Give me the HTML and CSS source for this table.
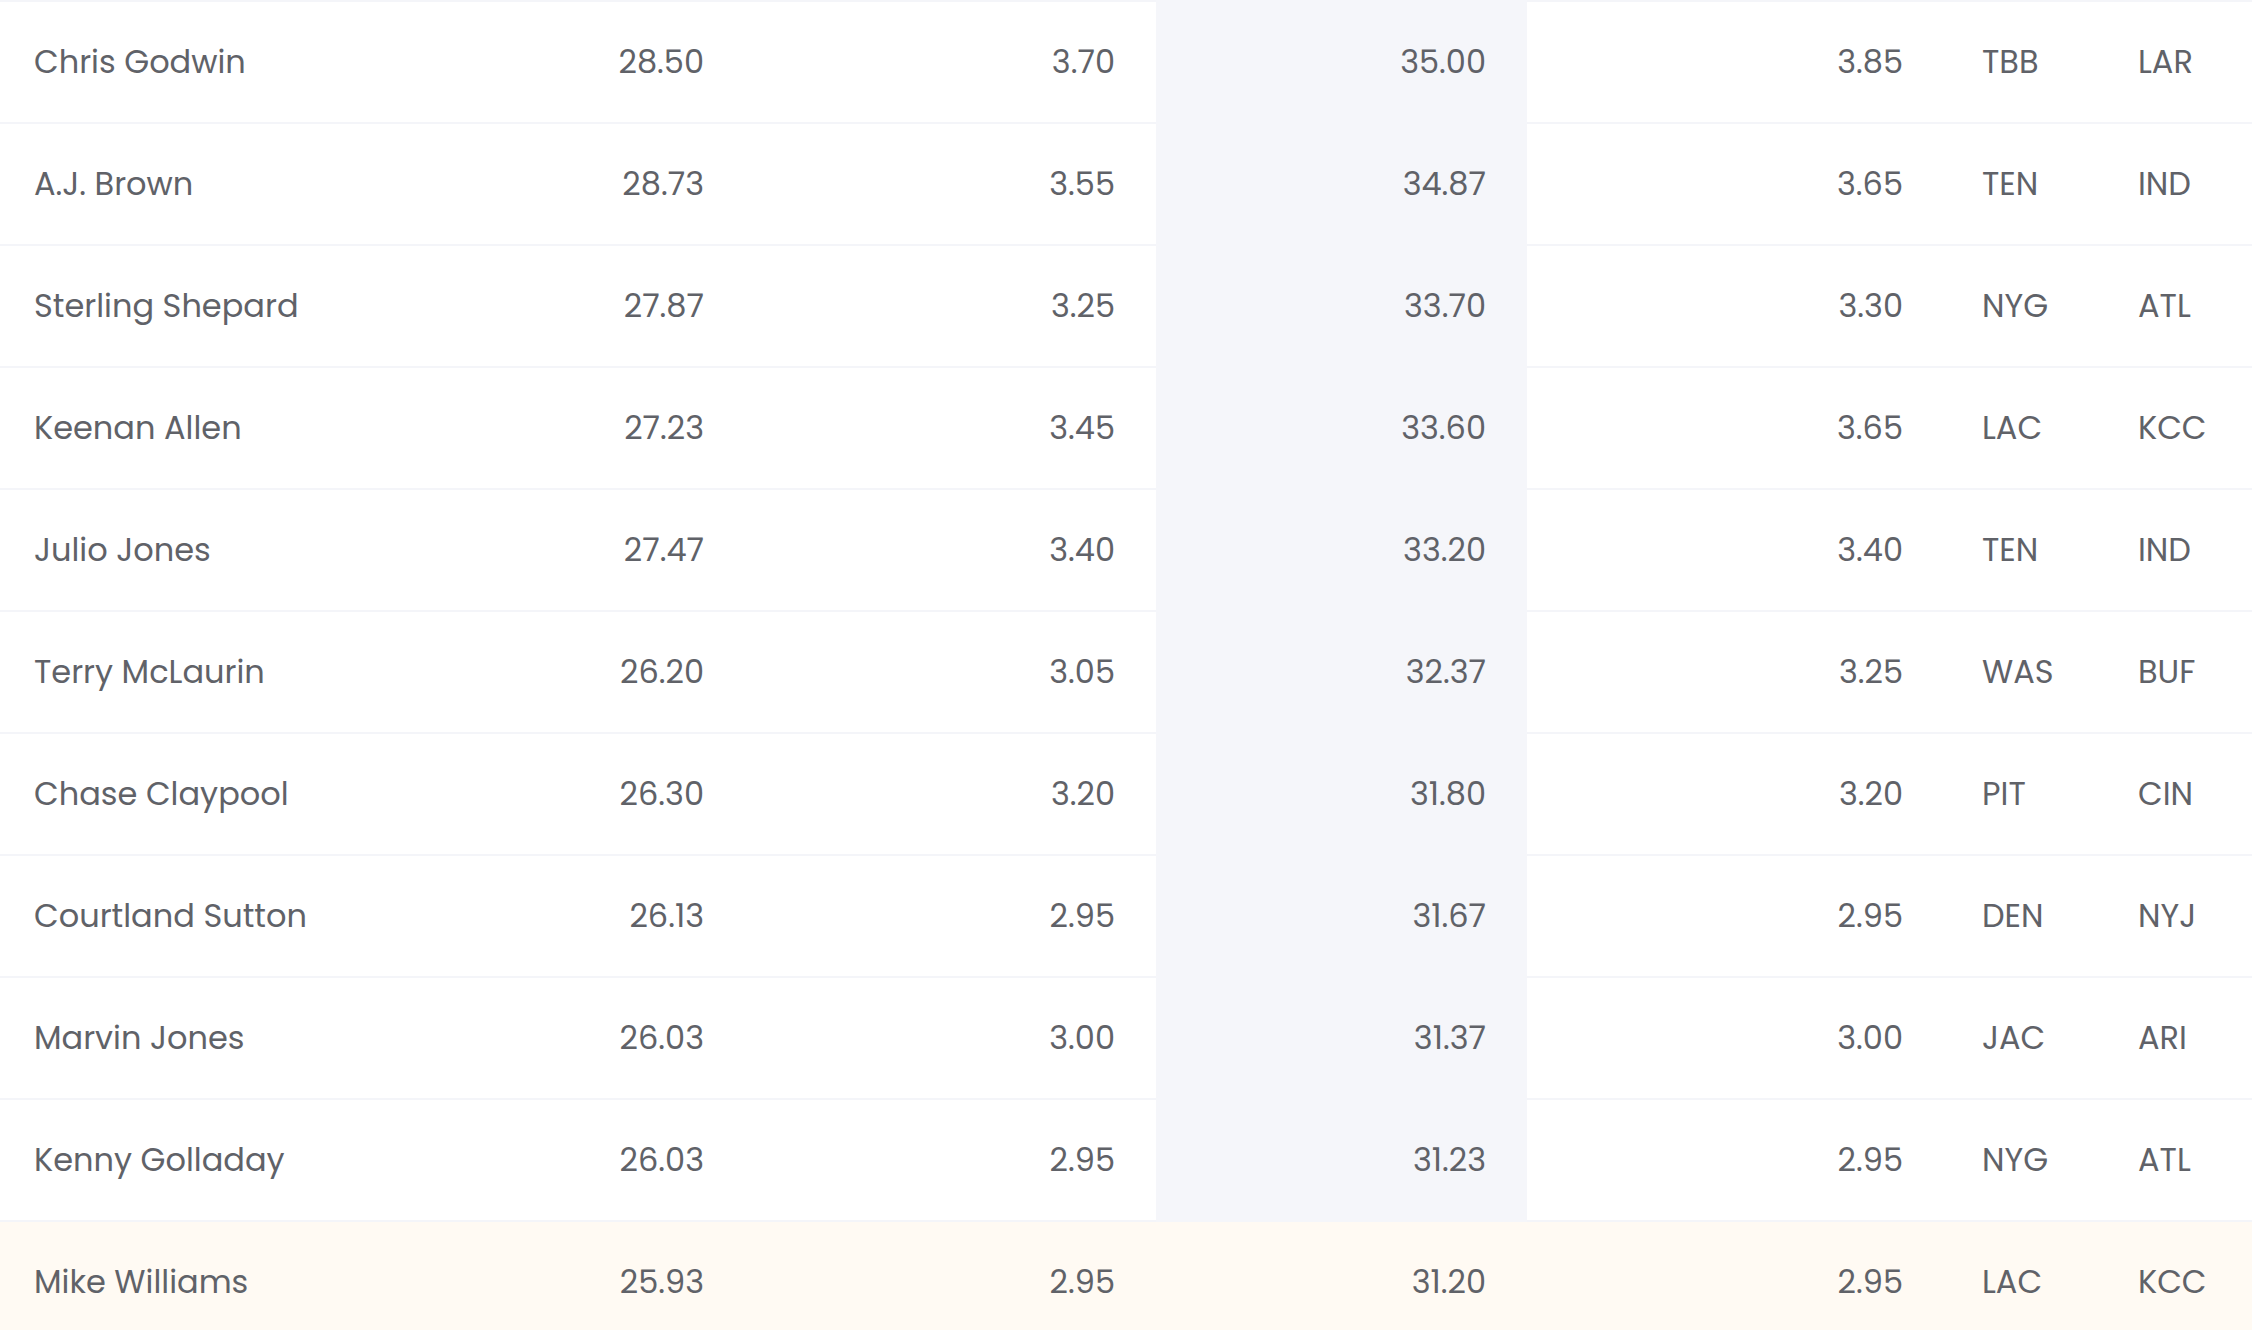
FILE: index.html
```html
<!DOCTYPE html>
<html lang="en">
<head>
<meta charset="utf-8">
<title>Projections</title>
<link rel="stylesheet" href="styles.css">
</head>
<body>
<div class="table">
  <div class="row"><div class="cell name">Chris Godwin</div><div class="cell num">28.50</div><div class="cell num">3.70</div><div class="cell num hl">35.00</div><div class="cell num">3.85</div><div class="cell team">TBB</div><div class="cell team">LAR</div></div>
  <div class="row"><div class="cell name">A.J. Brown</div><div class="cell num">28.73</div><div class="cell num">3.55</div><div class="cell num hl">34.87</div><div class="cell num">3.65</div><div class="cell team">TEN</div><div class="cell team">IND</div></div>
  <div class="row"><div class="cell name">Sterling Shepard</div><div class="cell num">27.87</div><div class="cell num">3.25</div><div class="cell num hl">33.70</div><div class="cell num">3.30</div><div class="cell team">NYG</div><div class="cell team">ATL</div></div>
  <div class="row"><div class="cell name">Keenan Allen</div><div class="cell num">27.23</div><div class="cell num">3.45</div><div class="cell num hl">33.60</div><div class="cell num">3.65</div><div class="cell team">LAC</div><div class="cell team">KCC</div></div>
  <div class="row"><div class="cell name">Julio Jones</div><div class="cell num">27.47</div><div class="cell num">3.40</div><div class="cell num hl">33.20</div><div class="cell num">3.40</div><div class="cell team">TEN</div><div class="cell team">IND</div></div>
  <div class="row"><div class="cell name">Terry McLaurin</div><div class="cell num">26.20</div><div class="cell num">3.05</div><div class="cell num hl">32.37</div><div class="cell num">3.25</div><div class="cell team">WAS</div><div class="cell team">BUF</div></div>
  <div class="row"><div class="cell name">Chase Claypool</div><div class="cell num">26.30</div><div class="cell num">3.20</div><div class="cell num hl">31.80</div><div class="cell num">3.20</div><div class="cell team">PIT</div><div class="cell team">CIN</div></div>
  <div class="row"><div class="cell name">Courtland Sutton</div><div class="cell num">26.13</div><div class="cell num">2.95</div><div class="cell num hl">31.67</div><div class="cell num">2.95</div><div class="cell team">DEN</div><div class="cell team">NYJ</div></div>
  <div class="row"><div class="cell name">Marvin Jones</div><div class="cell num">26.03</div><div class="cell num">3.00</div><div class="cell num hl">31.37</div><div class="cell num">3.00</div><div class="cell team">JAC</div><div class="cell team">ARI</div></div>
  <div class="row"><div class="cell name">Kenny Golladay</div><div class="cell num">26.03</div><div class="cell num">2.95</div><div class="cell num hl">31.23</div><div class="cell num">2.95</div><div class="cell team">NYG</div><div class="cell team">ATL</div></div>
  <div class="row mine"><div class="cell name">Mike Williams</div><div class="cell num">25.93</div><div class="cell num">2.95</div><div class="cell num hl">31.20</div><div class="cell num">2.95</div><div class="cell team">LAC</div><div class="cell team">KCC</div></div>
</div>
</body>
</html>
```

FILE: styles.css
```css
html, body {
  margin: 0;
  padding: 0;
  background: #ffffff;
}

body {
  font-family: Poppins, "Open Sans", sans-serif;
  font-size: 32px;
  color: #606268;
  overflow: hidden;
}

.table {
  display: flex;
  flex-direction: column;
}

.row {
  display: grid;
  grid-template-columns: 400px 345px 411px 371px 417px 156px 152px;
  height: 122px;
  background: #ffffff;
}

.cell {
  display: flex;
  align-items: center;
  border-top: 2px solid #f4f5f9;
  white-space: nowrap;
}

.name {
  padding-left: 34px;
}

.num {
  justify-content: flex-end;
  padding-right: 41px;
}

.team {
  padding-left: 38px;
}

.hl {
  background: #f5f6fa;
  border-top-color: #f5f6fa;
}

.row.mine {
  background: #fffaf3;
}

.row.mine .hl {
  background: #fffaf3;
  border-top-color: #f5f6fa;
}
```
